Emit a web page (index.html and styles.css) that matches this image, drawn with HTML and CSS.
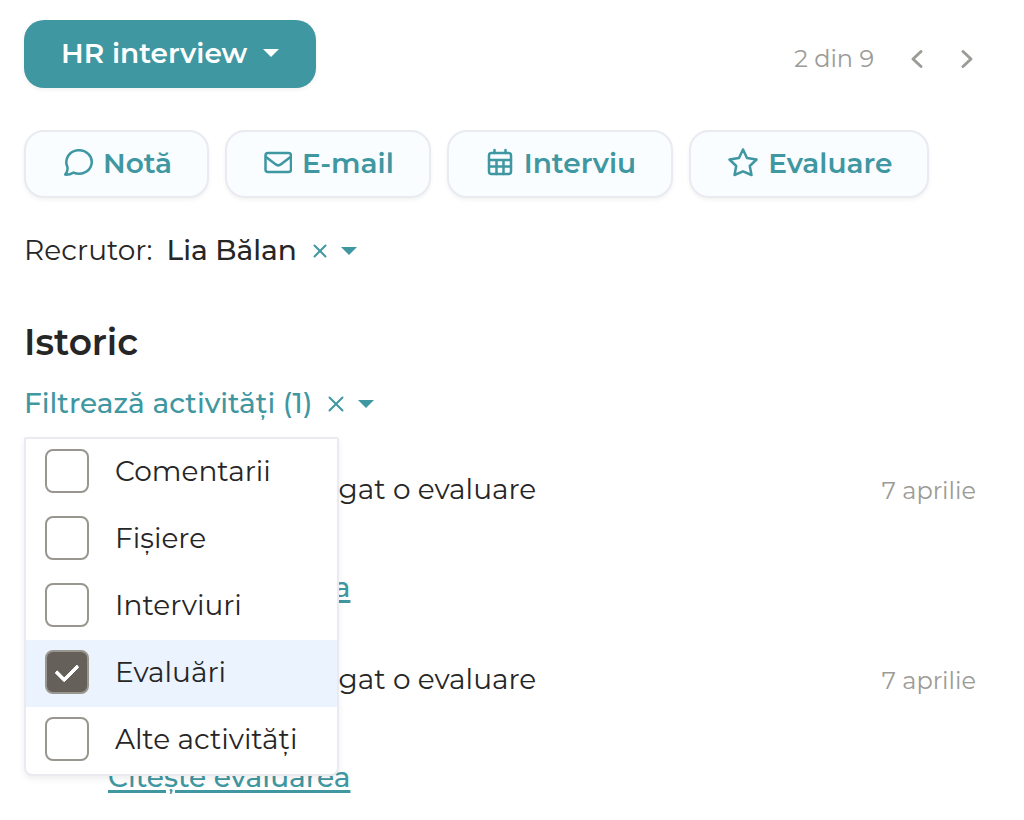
FILE: index.html
```
<!DOCTYPE html>
<html lang="ro">
<head>
  <meta charset="UTF-8" />
  <meta name="viewport" content="width=device-width, initial-scale=1.0"/>
  <title>Istoric candidat</title>
  <link rel="stylesheet" href="styles.css">
</head>
<body>
  <header class="top-bar">
    <button class="stage-btn" type="button">HR interview <span class="caret"></span></button>
    <nav class="pager">
      <span>2 din 9</span>
      <button type="button" aria-label="Înapoi">
        <svg width="14" height="20" viewBox="0 0 14 20"><path d="M11 2.500 3 10l8 7.500"/></svg>
      </button>
      <button type="button" aria-label="Înainte">
        <svg width="14" height="20" viewBox="0 0 14 20"><path d="M3 2.500 11 10l-8 7.500"/></svg>
      </button>
    </nav>
  </header>

  <div class="actions">
    <button class="action-btn" type="button">
      <svg width="30" height="30" viewBox="0 0 30 30"><path d="M4.300 18.500A12.700 11.800 0 1 1 10.500 24.600C8 26 5 26.800 2.200 26.600C4 24.500 5 21.500 4.300 18.500Z"/></svg>
      Notă
    </button>
    <button class="action-btn" type="button">
      <svg width="28" height="30" viewBox="0 0 28 30"><rect x="1.500" y="5" width="25.500" height="19" rx="2.500"/><path d="M2 9 11.500 16.300Q14.200 18.500 17 16.300L26.500 9"/></svg>
      E-mail
    </button>
    <button class="action-btn" type="button">
      <svg width="28" height="30" viewBox="0 0 28 30"><rect x="3" y="5" width="22" height="21" rx="2.500"/><path d="M8.500 2v3M19.500 2v3M3 12h22M3 18.500h22M10.500 12v14M17.500 12v14"/></svg>
      Interviu
    </button>
    <button class="action-btn" type="button">
      <svg width="30" height="30" viewBox="0 0 30 30"><path d="M15 1.500 19 10 28.500 11.500 21.800 18 23.500 27 15 23.300 6.500 27 8.200 18 1.500 11.500 11 10Z"/></svg>
      Evaluare
    </button>
  </div>

  <div class="recruiter">
    <span>Recrutor:</span>
    <span class="recruiter-name">Lia Bălan</span>
    <button class="icon-btn" type="button" aria-label="Șterge recrutorul">
      <svg width="14" height="14" viewBox="0 0 14 14"><path d="M1.500 1.500 12.500 12.500M12.500 1.500 1.500 12.500"/></svg>
    </button>
    <button class="icon-btn" type="button" aria-label="Alege recrutorul"><span class="caret"></span></button>
  </div>

  <main>
    <h2>Istoric</h2>

    <div class="filter">
      <button class="filter-label" type="button">Filtrează activități (1)</button>
      <button class="icon-btn" type="button" aria-label="Șterge filtrul">
        <svg width="16" height="16" viewBox="0 0 16 16"><path d="M1.500 1.500 14.500 14.500M14.500 1.500 1.500 14.500"/></svg>
      </button>
      <button class="icon-btn" type="button" aria-label="Deschide filtrul"><span class="caret"></span></button>

      <div class="filter-menu">
        <label class="option"><input type="checkbox"> Comentarii</label>
        <label class="option"><input type="checkbox"> Fișiere</label>
        <label class="option"><input type="checkbox"> Interviuri</label>
        <label class="option selected"><input type="checkbox" checked> Evaluări</label>
        <label class="option"><input type="checkbox"> Alte activități</label>
      </div>
    </div>

    <ul class="history">
      <li>
        <div class="entry">
          <span>Lia Bălan a adăugat o evaluare</span>
          <time>7 aprilie</time>
        </div>
        <a href="#">Citește evaluarea</a>
      </li>
      <li>
        <div class="entry">
          <span>Lia Bălan a adăugat o evaluare</span>
          <time>7 aprilie</time>
        </div>
        <a href="#">Citește evaluarea</a>
      </li>
    </ul>
  </main>
</body>
</html>
```
FILE: styles.css
```
:root {
  --teal: #3f97a1;
  --text: #262626;
  --muted: #9c9b96;
  --border: #e9ebf1;
  --highlight: #ebf3fe;
}

* {
  box-sizing: border-box;
}

body {
  margin: 0;
  padding: 20px 48px 24px 24px;
  font-family: Montserrat, Inter, sans-serif;
  font-size: 28px;
  line-height: 36px;
  color: var(--text);
  background: #fff;
}

button {
  font: inherit;
  color: inherit;
  background: none;
  border: none;
  padding: 0;
  cursor: pointer;
}

svg {
  display: block;
  flex: none;
  fill: none;
  stroke: currentColor;
  stroke-width: 2.5;
  stroke-linecap: round;
  stroke-linejoin: round;
}

.caret {
  border: 8px solid transparent;
  border-top-color: currentColor;
  border-bottom: none;
}

.top-bar {
  display: flex;
  justify-content: space-between;
  align-items: center;
}

.stage-btn {
  display: flex;
  align-items: center;
  gap: 16px;
  height: 68px;
  padding: 0 37px 2px;
  border-radius: 20px;
  background: var(--teal);
  color: #fff;
  font-weight: 600;
  box-shadow: 0 2px 4px rgba(0, 0, 0, 0.06);
}

.pager {
  display: flex;
  align-items: center;
  gap: 36px;
  padding: 9px 2px 0 0;
  font-size: 24px;
  color: var(--muted);
}

.pager svg {
  stroke-width: 3;
}

.actions {
  display: flex;
  gap: 16px;
  margin-top: 42px;
}

.action-btn {
  display: flex;
  align-items: center;
  gap: 10px;
  height: 68px;
  padding: 0 35px 2px 37px;
  border: 2px solid var(--border);
  border-radius: 20px;
  background: #f9fdff;
  color: var(--teal);
  font-weight: 600;
  box-shadow: 0 2px 4px rgba(0, 0, 0, 0.05);
}

.recruiter {
  display: flex;
  align-items: center;
  margin-top: 34px;
}

.recruiter-name {
  margin: 0 16px 0 14px;
  font-weight: 500;
}

.icon-btn {
  display: flex;
  padding-top: 2px;
  color: var(--teal);
}

.icon-btn + .icon-btn {
  margin-left: 14px;
}

.icon-btn svg {
  stroke-width: 2;
}

h2 {
  margin: 52px 0 0;
  font-size: 36px;
  line-height: 44px;
  font-weight: 600;
}

.filter {
  position: relative;
  display: flex;
  align-items: center;
  margin-top: 21px;
}

.filter-label {
  margin-right: 16px;
  color: var(--teal);
  font-weight: 500;
}

.filter-menu {
  position: absolute;
  top: 52px;
  left: 0;
  z-index: 1;
  width: 315px;
  border: 2px solid var(--border);
  border-radius: 2px 2px 8px 8px;
  background: #fff;
  box-shadow: 0 3px 6px rgba(0, 0, 0, 0.07);
  overflow: hidden;
}

.option {
  display: flex;
  align-items: center;
  gap: 26px;
  height: 67px;
  padding: 0 0 3px 19px;
  cursor: pointer;
}

.option.selected {
  background: var(--highlight);
}

.option input {
  appearance: none;
  width: 44px;
  height: 44px;
  margin: 0;
  border: 2px solid #98968f;
  border-radius: 8px;
  background: #fff;
}

.option input:checked {
  display: grid;
  place-items: center;
  background: #66605b;
}

/* tick */
.option input:checked::after {
  content: "";
  width: 10px;
  height: 18px;
  margin-bottom: 4px;
  border: solid #fff;
  border-width: 0 4px 4px 0;
  border-radius: 2px;
  transform: rotate(45deg);
}

.history {
  list-style: none;
  margin: 50px 0 0;
  padding: 0 0 0 84px;
}

.history li + li {
  margin-top: 56px;
}

.entry {
  display: flex;
  justify-content: space-between;
  align-items: baseline;
  margin-bottom: 60px;
}

.entry time {
  font-size: 24px;
  color: var(--muted);
}

.history a {
  color: var(--teal);
  font-weight: 500;
  text-underline-offset: 3px;
  text-decoration-thickness: 3px;
}
```
